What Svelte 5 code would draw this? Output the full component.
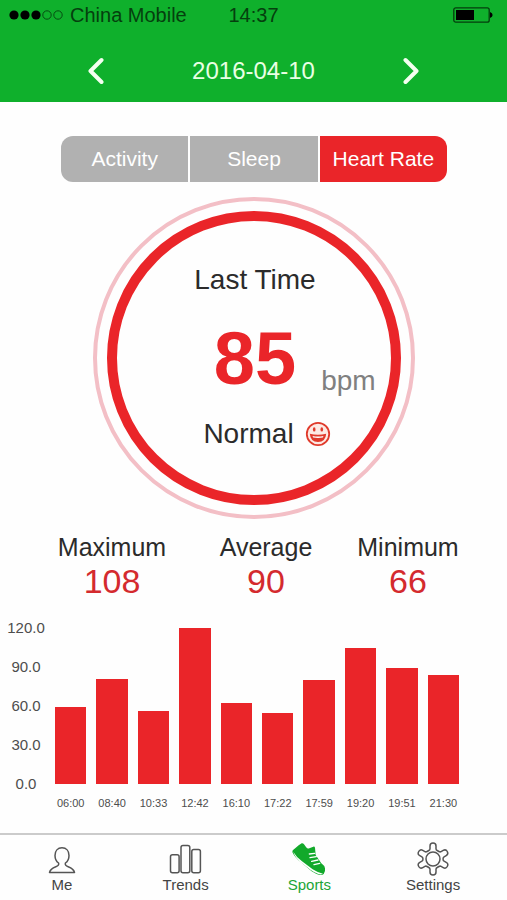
<script>
  const views = ['Activity', 'Sleep', 'Heart Rate'];

  const stats = [
    { label: 'Maximum', value: 108 },
    { label: 'Average', value: 90 },
    { label: 'Minimum', value: 66 }
  ];

  const ticks = ['120.0', '90.0', '60.0', '30.0', '0.0'];
  const maxRate = 120;

  const readings = [
    { time: '06:00', rate: 59 },
    { time: '08:40', rate: 81 },
    { time: '10:33', rate: 56 },
    { time: '12:42', rate: 120 },
    { time: '16:10', rate: 62 },
    { time: '17:22', rate: 55 },
    { time: '17:59', rate: 80 },
    { time: '19:20', rate: 105 },
    { time: '19:51', rate: 89 },
    { time: '21:30', rate: 84 }
  ];

  const tabs = ['Me', 'Trends', 'Sports', 'Settings'];

  let activeView = $state('Heart Rate');
  let activeTab = $state('Sports');
</script>

<div class="app">
  <header>
    <div class="status">
      <div class="carrier">
        <svg class="signal" viewBox="0 0 56 12" aria-hidden="true">
          {#each [6, 17, 28] as cx}
            <circle {cx} cy="6" r="4.6" />
          {/each}
          {#each [39, 50] as cx}
            <circle {cx} cy="6" r="4.2" fill="none" stroke="#064d12" />
          {/each}
        </svg>
        <span>China Mobile</span>
      </div>
      <span>14:37</span>
      <svg class="battery" viewBox="0 0 40 16" aria-hidden="true">
        <rect x="0.8" y="0.8" width="35.4" height="14.4" rx="2" fill="none" stroke="#043d0c" stroke-width="1.3" />
        <rect x="3" y="3" width="18" height="10" />
        <path d="M37 5q2.6 1 2.6 3t-2.6 3z" />
      </svg>
    </div>

    <div class="date">
      <button aria-label="Previous day">
        <svg viewBox="0 0 18 30"><path d="M15.500 4L4.500 15l11 11" /></svg>
      </button>
      <time datetime="2016-04-10">2016-04-10</time>
      <button aria-label="Next day">
        <svg viewBox="0 0 18 30"><path d="M2.500 4l11 11l-11 11" /></svg>
      </button>
    </div>
  </header>

  <main>
    <div class="views">
      {#each views as view}
        <button class:active={activeView === view} onclick={() => (activeView = view)}>{view}</button>
      {/each}
    </div>

    <section class="dial">
      <div class="ring">
        <p>Last Time</p>
        <div class="reading">
          <strong>85</strong>
          <span>bpm</span>
        </div>
        <p class="mood">
          Normal
          <svg viewBox="0 0 26 26" aria-hidden="true">
            <circle cx="13" cy="13" r="11.2" fill="#fdeae4" stroke="#e03a2b" stroke-width="1.8" />
            <ellipse cx="9.200" cy="8.400" rx="1.300" ry="2.200" fill="#e03a2b" />
            <ellipse cx="16.800" cy="8.400" rx="1.300" ry="2.200" fill="#e03a2b" />
            <path d="M4.800 12.800q8.200 2 16.400 0q-.6 8.200-8.200 8.200t-8.200-8.200z" fill="#e03a2b" />
            <path d="M7.500 15q5.500 1 11 0l-.7 1.600q-4.800.8-9.600 0z" fill="#fff" />
          </svg>
        </p>
      </div>
    </section>

    <dl class="stats">
      {#each stats as stat}
        <div>
          <dt>{stat.label}</dt>
          <dd>{stat.value}</dd>
        </div>
      {/each}
    </dl>

    <section class="chart" aria-label="Heart rate by time">
      <div class="axis">
        {#each ticks as tick}
          <span>{tick}</span>
        {/each}
      </div>
      <div class="plot">
        {#each readings as reading}
          <div class="slot">
            <div class="track">
              <div class="bar" style="height: {(reading.rate / maxRate) * 100}%"></div>
            </div>
            <span>{reading.time}</span>
          </div>
        {/each}
      </div>
    </section>
  </main>

  <nav>
    {#each tabs as tab}
      <button class:active={activeTab === tab} onclick={() => (activeTab = tab)}>
        {#if tab === 'Me'}
          <svg viewBox="0 0 34 34" aria-hidden="true">
            <path d="M17 5.800c-4.300 0-7 3.200-7 7.600c0 3.200 1.400 6 3.600 7.600c.6 2-.6 3-2.800 3.800c-3.400 1.300-5.600 2.600-6.300 5.700h25c-.7-3.100-2.900-4.400-6.300-5.700c-2.200-.8-3.400-1.800-2.800-3.800c2.200-1.600 3.600-4.400 3.600-7.600c0-4.400-2.700-7.600-7-7.600z" />
          </svg>
        {:else if tab === 'Trends'}
          <svg viewBox="0 0 34 34" aria-hidden="true">
            <rect x="1.500" y="12.800" width="8.600" height="18" rx="2" />
            <rect x="12" y="3.400" width="8.800" height="27.400" rx="2" />
            <rect x="22.800" y="7.400" width="8.600" height="23.400" rx="2" />
          </svg>
        {:else if tab === 'Sports'}
          <svg class="shoe" viewBox="70 50 102 102" aria-hidden="true">
            <path d="M90 60L99 54q4-1 7 3l6 8q4 6 10 4l12-5q4-1 5 3l2 22l17 25q9 6 11 15q2 9-4 17q-4 4-12 3q-12-3-24-11L97 111Q76 94 71 80q0-6 5-8z" fill="#12a92b" />
            <path d="M74 80q8 14 26 28l32 24q15 10 31 13q-7 4-14 1q-13-5-24-13l-31-24Q77 93 74 80z" fill="#fff" />
            <path d="M122 86l16-2M124 97l19-3M129 108l19-4M136 118l17-4" fill="none" stroke="#fff" stroke-width="4" stroke-linecap="round" />
          </svg>
        {:else}
          <svg viewBox="0 0 34 34" aria-hidden="true">
            <path d="M14 4q0-3 3-3t3 3v2.700q0 1.200 1.200 1.800l1.700 1q1.200.7 2.200.1l2.100-1.200q2.600-1.500 4.100 1.100t-1.100 4.100l-2.100 1.200q-1 .6-1 1.800v.8q0 1.200 1 1.800l2.100 1.200q2.600 1.500 1.100 4.100t-4.100 1.100l-2.100-1.200q-1-.6-2.200.1l-1.700 1q-1.200.6-1.200 1.800V30q0 3-3 3t-3-3v-2.700q0-1.200-1.200-1.800l-1.700-1q-1.200-.7-2.200-.1l-2.100 1.200q-2.600 1.500-4.100-1.100t1.100-4.100l2.100-1.200q1-.6 1-1.800v-.8q0-1.200-1-1.800l-2.100-1.200q-2.600-1.500-1.100-4.100t4.100-1.100l2.100 1.200q1 .6 2.200-.1l1.700-1Q14 7.900 14 6.700z" />
            <circle cx="17" cy="17" r="7" />
          </svg>
        {/if}
        <span>{tab}</span>
      </button>
    {/each}
  </nav>
</div>

<style>
  :global(body) {
    margin: 0;
    background: #fefefe;
  }

  .app {
    display: flex;
    flex-direction: column;
    min-height: 100vh;
    font-family: "Liberation Sans", Arial, sans-serif;
    color: #2b2b2b;
  }

  button {
    padding: 0;
    border: 0;
    background: none;
    font: inherit;
    color: inherit;
    cursor: pointer;
  }

  p, dl, dd {
    margin: 0;
  }

  header {
    background: #0fb02c;
  }

  .status {
    display: grid;
    grid-template-columns: 1fr auto 1fr;
    align-items: center;
    height: 30px;
    padding: 0 8px;
    font-size: 20px;
    color: #053f0e;
  }

  .carrier {
    display: flex;
    align-items: center;
    gap: 6px;
    white-space: nowrap;
  }

  .signal {
    width: 56px;
    height: 12px;
  }

  .battery {
    width: 40px;
    height: 16px;
    margin-right: 6px;
    justify-self: end;
  }

  .date {
    display: flex;
    justify-content: space-between;
    align-items: center;
    padding: 26px 86px 16px;
    font-size: 24px;
    line-height: 30px;
    color: #e9ffe4;
  }

  .date button {
    display: flex;
  }

  .date svg {
    width: 18px;
    height: 30px;
    fill: none;
    stroke: #f4fff0;
    stroke-width: 4;
    stroke-linecap: round;
    stroke-linejoin: round;
  }

  .views {
    display: grid;
    grid-template-columns: repeat(3, 1fr);
    gap: 2px;
    margin: 34px 60px 0 61px;
    border-radius: 12px;
    overflow: hidden;
  }

  .views button {
    height: 46px;
    background: #b1b1b1;
    color: #fff;
    font-size: 21px;
  }

  .views button.active {
    background: #ea2529;
  }

  .dial {
    width: 294px;
    margin: 15px auto 0;
    padding: 10px;
    border: 4px solid #f3bfc6;
    border-radius: 50%;
  }

  .ring {
    display: flex;
    flex-direction: column;
    align-items: center;
    justify-content: center;
    height: 294px;
    padding: 0 0 2px 3px;
    box-sizing: border-box;
    border: 10px solid #ea2529;
    border-radius: 50%;
    font-size: 28px;
    line-height: 32px;
  }

  .reading {
    display: grid;
    grid-template-columns: 1fr auto 1fr;
    align-items: end;
    column-gap: 25px;
    width: 100%;
    margin: 21px 0 17px;
  }

  .reading strong {
    grid-column: 2;
    font-size: 74px;
    line-height: 84px;
    color: #ea2529;
  }

  .reading span {
    margin-bottom: 4px;
    color: #808080;
  }

  .mood {
    display: flex;
    align-items: center;
    gap: 11px;
    padding-left: 24px;
  }

  .mood svg {
    width: 26px;
    height: 26px;
  }

  .stats {
    display: grid;
    grid-template-columns: 158fr 150fr 134fr;
    margin-top: 13px;
    padding: 0 32px 0 33px;
    text-align: center;
  }

  .stats dt {
    font-size: 25px;
    line-height: 30px;
  }

  .stats dd {
    font-size: 34px;
    line-height: 38px;
    color: #d42a2e;
  }

  .chart {
    display: grid;
    grid-template-columns: 40px 1fr;
    column-gap: 9px;
    padding: 18px 48px 0 6px;
    color: #4d4d4d;
  }

  .axis {
    display: flex;
    flex-direction: column;
    justify-content: space-between;
    align-items: center;
    height: 176px;
    font-size: 15px;
    line-height: 20px;
  }

  .plot {
    display: flex;
    gap: 10px;
    padding-top: 10px;
  }

  .slot {
    flex: 1;
    min-width: 0;
    text-align: center;
    font-size: 11px;
    line-height: 14px;
  }

  .track {
    display: flex;
    align-items: flex-end;
    height: 156px;
    margin-bottom: 12px;
  }

  .bar {
    width: 100%;
    background: #ea2529;
  }

  nav {
    display: grid;
    grid-template-columns: repeat(4, 1fr);
    margin-top: auto;
    padding: 7px 12px 6px 0;
    border-top: 2px solid #cbcbcb;
    font-size: 15px;
    line-height: 18px;
    color: #444;
  }

  nav button {
    display: flex;
    flex-direction: column;
    align-items: center;
  }

  nav svg {
    width: 34px;
    height: 34px;
    fill: none;
    stroke: #555;
    stroke-width: 1.5;
    stroke-linejoin: round;
  }

  nav .shoe {
    stroke: none;
  }

  nav button.active {
    color: #1ba536;
  }
</style>
